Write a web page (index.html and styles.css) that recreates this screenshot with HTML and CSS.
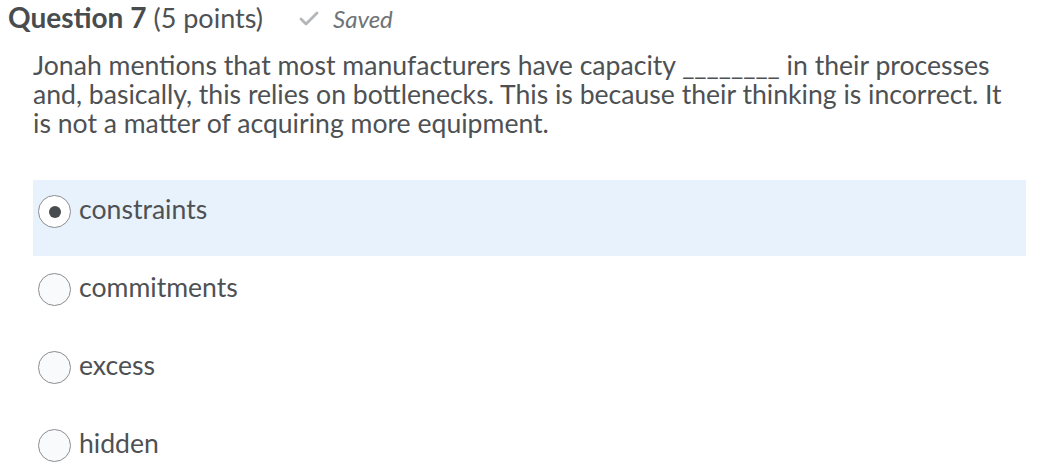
FILE: index.html
```html
<!DOCTYPE html>
<html>
<head>
<meta charset="utf-8">
<link rel="stylesheet" href="styles.css">
</head>
<body>
<div class="question">
  <div class="q-header">
    <span class="q-title">Question 7</span>
    <span class="q-points">(5 points)</span>
    <span class="q-saved">
      <svg class="check" width="20" height="15" viewBox="0 0 20 15"><path d="M2 8 L7 13 L18 2" fill="none" stroke="#b3b6b8" stroke-width="2.8" stroke-linecap="round" stroke-linejoin="round"/></svg>
      <span class="saved-text">Saved</span>
    </span>
  </div>
  <div class="q-body">
    <p class="q-text">Jonah mentions that most manufacturers have capacity ________ in their processes and, basically, this relies on bottlenecks. This is because their thinking is incorrect. It is not a matter of acquiring more equipment.</p>
    <div class="options">
      <label class="option selected"><span class="radio"><span class="dot"></span></span><span class="opt-text">constraints</span></label>
      <label class="option"><span class="radio"></span><span class="opt-text">commitments</span></label>
      <label class="option"><span class="radio"></span><span class="opt-text">excess</span></label>
      <label class="option"><span class="radio"></span><span class="opt-text">hidden</span></label>
    </div>
  </div>
</div>
</body>
</html>
```
FILE: styles.css
```css
html, body {
  margin: 0;
  padding: 0;
  background: #ffffff;
}
body {
  font-family: Lato, "Open Sans", sans-serif;
  color: #4e5154;
}
.question {
  padding: 0 20px 0 8px;
}
.q-header {
  display: flex;
  align-items: baseline;
  height: 34px;
  line-height: 34px;
}
.q-title {
  font-weight: 700;
  font-size: 28px;
  color: #494c4e;
}
.q-points {
  font-size: 27px;
  margin-left: 7px;
}
.q-saved {
  margin-left: 36px;
  display: flex;
  align-items: baseline;
  color: #6e7376;
}
.check {
  align-self: center;
  margin-right: 14px;
  position: relative;
  top: -1px;
}
.saved-text {
  font-style: italic;
  font-size: 24px;
}
.q-body {
  padding-left: 25px;
}
.q-text {
  margin: 17px 0 0 0;
  font-size: 26.6px;
  line-height: 29px;
  width: 980px;
}
.options {
  margin-top: 42px;
  display: flex;
  flex-direction: column;
  gap: 2px;
}
.option {
  display: flex;
  align-items: flex-start;
  height: 76px;
  padding-left: 5px;
  padding-top: 15px;
  box-sizing: border-box;
}
.option.selected {
  background: #e8f2fc;
}
.radio {
  width: 31px;
  height: 31px;
  border: 1px solid #8a8d90;
  border-radius: 50%;
  background: #f9fafb;
  display: flex;
  align-items: center;
  justify-content: center;
  flex: none;
}
.option.selected .radio {
  background: #ffffff;
}
.dot {
  width: 12px;
  height: 12px;
  border-radius: 50%;
  background: #494c4e;
}
.opt-text {
  margin-left: 8px;
  font-size: 26.6px;
  line-height: 28px;
}
```
